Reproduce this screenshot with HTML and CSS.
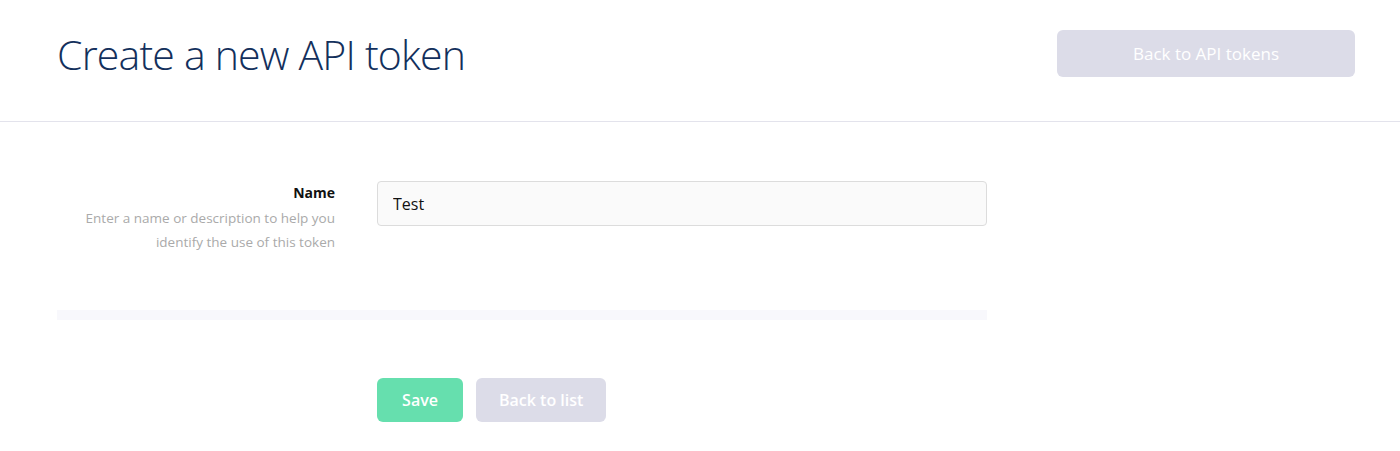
FILE: index.html
```html
<!DOCTYPE html>
<html lang="en">
  <head>
    <meta charset="UTF-8" />
    <meta name="viewport" content="width=device-width, initial-scale=1.0" />
    <title>Create a new API token</title>
    <link rel="stylesheet" href="styles.css">
  </head>
  <body>
    <div class="header">
      <h1>Create a new API token</h1>
      <button class="btn btn-muted btn-large">Back to API tokens</button>
    </div>

    <form class="form">
      <div class="field">
        <div class="field-label">
          <label for="tokenName">Name</label>
          <p>Enter a name or description to help you identify the use of this token</p>
        </div>
        <input type="text" id="tokenName" value="Test" />
      </div>

      <div class="separator"></div>

      <div class="actions">
        <button type="button" class="btn btn-save">Save</button>
        <button type="button" class="btn btn-muted">Back to list</button>
      </div>
    </form>
  </body>
</html>
```

FILE: styles.css
```css
body {
  margin: 0;
  padding: 0;
  background-color: #fff;
  font-family: "Open Sans", "Noto Sans", sans-serif;
  color: #222;
}

.header {
  display: flex;
  justify-content: space-between;
  align-items: flex-start;
  padding: 30px 45px 0 57px;
  height: 91px;
  border-bottom: 1px solid #e3e3ec;
}

h1 {
  margin: 0;
  font-size: 41px;
  font-weight: 300;
  color: #13305c; /* bleu nuit */
  line-height: 48px;
  letter-spacing: -0.8px;
}

.btn {
  border: none;
  border-radius: 6px;
  color: #fff;
  font-family: inherit;
  font-weight: 600;
  font-size: 16px;
  height: 44px;
  padding: 0 23px;
  cursor: pointer;
}

.btn-large {
  width: 298px;
  height: 47px;
  font-size: 17px;
  font-weight: 400;
}

.btn-muted {
  background-color: #dcdce8;
}

.btn-save {
  background-color: #66dfae; /* vert */
  width: 86px;
  padding: 0;
}

.form {
  padding: 59px 0 0 57px;
  width: 930px;
}

.field {
  display: flex;
  align-items: flex-start;
  min-height: 129px;
}

.field-label {
  width: 278px;
  margin-right: 42px;
  text-align: right;
}

.field-label label {
  display: block;
  font-size: 14px;
  font-weight: 700;
  line-height: 24px;
  color: #111;
}

.field-label p {
  margin: 1px 0 0;
  font-size: 13.5px;
  line-height: 24px;
  color: #aaa;
}

.field input[type="text"] {
  flex: 1;
  height: 45px;
  box-sizing: border-box;
  padding: 0 15px;
  background-color: #fafafa;
  border: 1px solid #dcdcdc;
  border-radius: 4px;
  font-family: inherit;
  font-size: 16px;
  color: #111;
}

.separator {
  height: 10px;
  background-color: #f8f8fc;
  margin-bottom: 58px;
}

.actions {
  display: flex;
  gap: 13px;
  padding-left: 320px;
}
```
